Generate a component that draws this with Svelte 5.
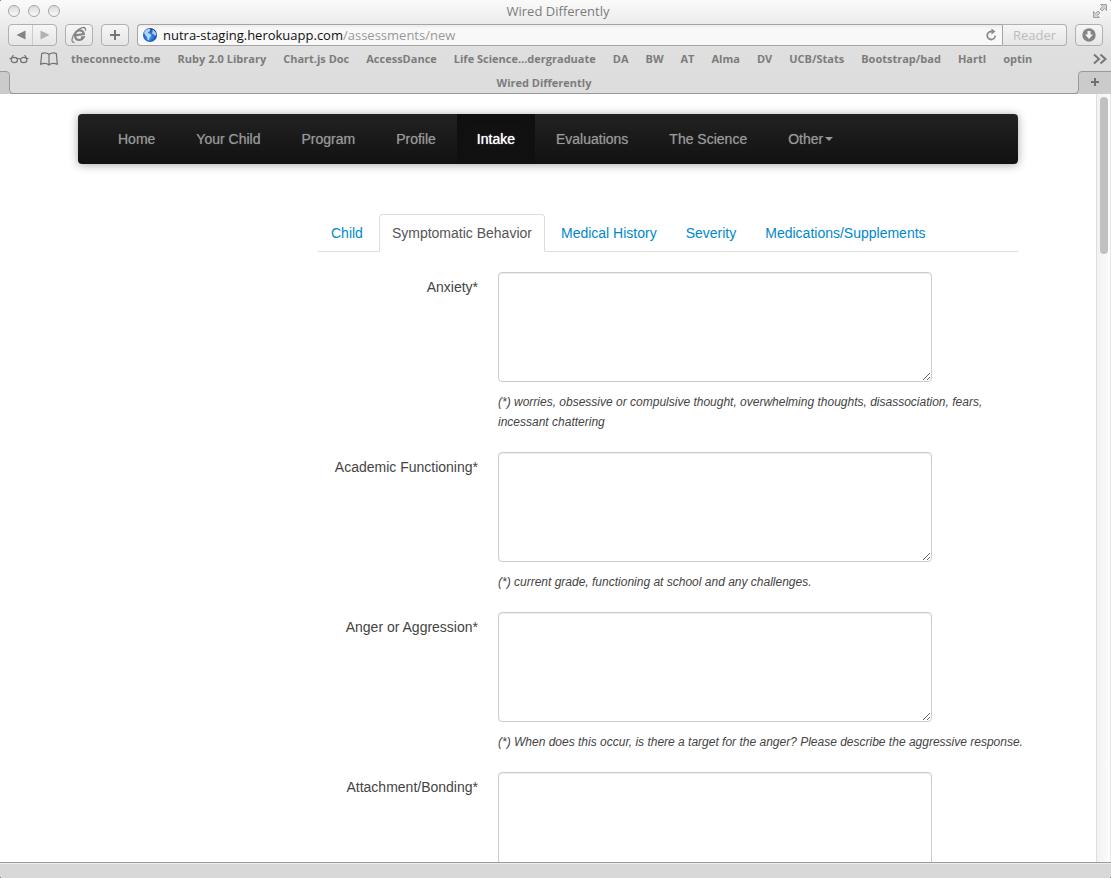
<script>
  const bookmarks = [
    'theconnecto.me',
    'Ruby 2.0 Library',
    'Chart.js Doc',
    'AccessDance',
    'Life Science…dergraduate',
    'DA',
    'BW',
    'AT',
    'Alma',
    'DV',
    'UCB/Stats',
    'Bootstrap/bad',
    'Hartl',
    'optin'
  ];
  const sections = [
    'Home',
    'Your Child',
    'Program',
    'Profile',
    'Intake',
    'Evaluations',
    'The Science',
    'Other'
  ];
  const tabs = [
    'Child',
    'Symptomatic Behavior',
    'Medical History',
    'Severity',
    'Medications/Supplements'
  ];
  const fields = [
    {
      id: 'anxiety',
      label: 'Anxiety*',
      help: '(*) worries, obsessive or compulsive thought, overwhelming thoughts, disassociation, fears, incessant chattering'
    },
    {
      id: 'academic',
      label: 'Academic Functioning*',
      help: '(*) current grade, functioning at school and any challenges.'
    },
    {
      id: 'anger',
      label: 'Anger or Aggression*',
      help: '(*) When does this occur, is there a target for the anger? Please describe the aggressive response.'
    },
    { id: 'attachment', label: 'Attachment/Bonding*', help: '' }
  ];
</script>

<div class="window">
  <header class="chrome">
    <div class="titlebar">
      <div class="lights">
        <button aria-label="Close"></button>
        <button aria-label="Minimize"></button>
        <button aria-label="Zoom"></button>
      </div>
      <span class="title">Wired Differently</span>
      <button class="plain full" aria-label="Full screen">
        <svg width="16" height="16" viewBox="0 0 16 16">
          <path d="M8.500 1.500h6v6l-2-2-2.500 2.500-2-2 2.500-2.500zM7.500 14.500h-6v-6l2 2 2.500-2.500 2 2-2.500 2.500z" fill="#cfcfcf" stroke="#a2a2a2" stroke-width="1" />
        </svg>
      </button>
    </div>

    <div class="toolbar">
      <div class="pair">
        <button aria-label="Back">
          <svg width="10" height="10" viewBox="0 0 10 10"><path d="M9.500 .5v9L.5 5z" fill="#838383" /></svg>
        </button>
        <button aria-label="Forward">
          <svg width="10" height="10" viewBox="0 0 10 10"><path d="M.5 .5v9L9.500 5z" fill="#b2b2b2" /></svg>
        </button>
      </div>
      <button class="tool" aria-label="Internet Explorer">
        <svg width="18" height="18" viewBox="0 0 18 18" fill="none">
          <path d="M5 9.300 13.800 8C13.500 5.500 11.500 4 9 4.500S4.500 7.200 5 10s2.500 4.300 5 3.900c1.800-.3 3-1.300 3.600-2.600l-2.600.3" stroke="#868686" stroke-width="2.200" />
          <path d="M4.500 16.300C.5 17 1.500 10.500 6 5.800 9.500 2 14 .5 15.300 2.300c.4.600.4 1.500 0 2.500" stroke="#868686" stroke-width="1.300" />
        </svg>
      </button>
      <button class="tool" aria-label="Add bookmark">
        <svg width="12" height="12" viewBox="0 0 12 12"><path d="M6 1v10M1 6h10" stroke="#777" stroke-width="2" /></svg>
      </button>
      <div class="address">
        <svg width="16" height="16" viewBox="0 0 16 16" aria-hidden="true">
          <defs>
            <radialGradient id="globe" cx=".45" cy=".6" r=".6">
              <stop offset="0" stop-color="#58a6ee" />
              <stop offset=".65" stop-color="#1e62c4" />
              <stop offset="1" stop-color="#123a8e" />
            </radialGradient>
          </defs>
          <circle cx="8" cy="8" r="7" fill="url(#globe)" />
          <path d="M2 5.500C3 3 5 1.800 7.500 1.500l1 1.500-1 1.500L6 5l.5 1.500L8.500 7l.5 2-1.500 1.500-.5 3-1.500-.7-.5-3L3 8zM10.500 2.300l3 2.700.8 3-1.300 1-1.500-2-1.500-.5.500-2z" fill="#c5e6fb" opacity=".85" />
        </svg>
        <a class="url" href="#address">nutra-staging.herokuapp.com<span>/assessments/new</span></a>
        <button class="plain" aria-label="Reload">
          <svg width="14" height="14" viewBox="0 0 14 14">
            <path d="M8 3.500H7a4 4 0 1 0 4.200 4.200" fill="none" stroke="#8a8a8a" stroke-width="1.800" />
            <path d="M7.500 .5v6L11.500 3.500z" fill="#8a8a8a" />
          </svg>
        </button>
      </div>
      <button class="reader">Reader</button>
      <button class="tool" aria-label="Downloads">
        <svg width="14" height="14" viewBox="0 0 14 14">
          <circle cx="7" cy="7" r="6.700" fill="#858585" />
          <path d="M5.500 3h3v3.500h2.500L7 11 3 6.500h2.500z" fill="#f2f2f2" />
        </svg>
      </button>
    </div>

    <nav class="bookmarks" aria-label="Bookmarks">
      <button class="plain" aria-label="Reading list">
        <svg width="20" height="12" viewBox="0 0 20 12" fill="none" stroke="#717171" stroke-width="1.200">
          <path d="M.5 5.500h2M17.500 5.500h2M8.500 6q1.500-1 3 0M2 5.500 4.500 2M18 5.500 15.500 2" />
          <ellipse cx="5.300" cy="7" rx="3.200" ry="2.600" /><ellipse cx="14.700" cy="7" rx="3.200" ry="2.600" />
        </svg>
      </button>
      <button class="plain book" aria-label="Bookmarks">
        <svg width="18" height="14" viewBox="0 0 18 14" fill="none" stroke="#717171" stroke-width="1.200">
          <path d="M9 2.500C7.500.8 4 .5 1.700 1.500L.7 12.300C3.500 11.200 7 11.300 9 13c2-1.700 5.500-1.800 8.300-.7L16.300 1.500C14 .5 10.500.8 9 2.500zV13" />
        </svg>
      </button>
      {#each bookmarks as name}
        <a href="#bookmark">{name}</a>
      {/each}
      <button class="plain more" aria-label="More bookmarks">
        <svg width="14" height="12" viewBox="0 0 14 12"><path d="M1 1.500 6 6 1 10.500M7.500 1.500l5 4.500-5 4.500" fill="none" stroke="#777" stroke-width="2" /></svg>
      </button>
    </nav>

    <div class="tabbar">
      <svg width="14" height="23" viewBox="0 0 14 23" aria-hidden="true">
        <path d="M0 .5h6q3 0 3 3v15.500q0 4 4.500 4H0z" fill="#cbcbcb" />
        <path d="M0 .5h6q3.500 0 3.500 3v15.500q0 3.500 4 3.500" fill="none" stroke="#9a9a9a" />
      </svg>
      <span>Wired Differently</span>
      <button class="plain" aria-label="New tab">
        <svg width="37" height="23" viewBox="0 0 37 23">
          <path d="M37 .5H8q-3 0-3 3v15.500q0 4-4.500 4H37z" fill="#cbcbcb" />
          <path d="M37 .5H8q-3.500 0-3.500 3v15.500q0 3.500-4 3.500" fill="none" stroke="#9a9a9a" />
          <path d="M21 7v8M17 11h8" stroke="#707070" stroke-width="2" />
        </svg>
      </button>
    </div>
  </header>

  <div class="viewport">
    <main>
      <div class="container">
        <nav class="navbar" aria-label="Main">
          {#each sections as name}
            <a href="#section" class:active={name === 'Intake'}>{name}{#if name === 'Other'}<i class="caret"></i>{/if}</a>
          {/each}
        </nav>
        <div class="content">
          <nav class="tabs" aria-label="Assessment">
            {#each tabs as name}
              <a href="#tab" class:active={name === 'Symptomatic Behavior'}>{name}</a>
            {/each}
          </nav>
          <form>
            {#each fields as field}
              <div class="group">
                <label for={field.id}>{field.label}</label>
                <div class="controls">
                  <textarea id={field.id}></textarea>
                  {#if field.help}<p>{field.help}</p>{/if}
                </div>
              </div>
            {/each}
          </form>
        </div>
      </div>
    </main>
    <div class="scrollbar"><div class="thumb"></div></div>
  </div>
  <footer></footer>
</div>

<style>
  :global(body) {
    margin: 0;
    background: #000;
  }
  * {
    box-sizing: border-box;
  }
  .window {
    display: flex;
    flex-direction: column;
    height: 100vh;
    overflow: hidden;
    border-radius: 2px;
    background: #fff;
    font-family: 'Liberation Sans', Arial, sans-serif;
  }
  a {
    text-decoration: none;
  }
  svg {
    display: block;
  }
  button {
    display: flex;
    align-items: center;
    justify-content: center;
    margin: 0;
    padding: 0;
    font: inherit;
  }
  .plain {
    border: 0;
    background: none;
  }

  .chrome {
    flex: none;
    border-bottom: 1px solid #999;
    background: linear-gradient(#fafafa, #ececec 24px, #dfdfdf 50px, #dcdcdc);
    color: #7c7c7c;
    font-family: 'Open Sans', 'Noto Sans', sans-serif;
    font-size: 13px;
  }
  .titlebar {
    display: grid;
    grid-template-columns: 1fr auto 1fr;
    align-items: center;
    height: 24px;
    padding: 0 3px 2px 8px;
  }
  .lights {
    display: flex;
    gap: 8px;
  }
  .lights button {
    width: 12px;
    height: 12px;
    border: 1px solid #a6a6a6;
    border-radius: 50%;
    background: linear-gradient(#dcdcdc, #f8f8f8);
  }
  .full {
    justify-self: end;
  }
  .toolbar {
    display: flex;
    gap: 8px;
    height: 22px;
    padding: 0 8px;
  }
  .pair,
  .tool,
  .reader {
    flex: none;
    border: 1px solid #b0b0b0;
    border-radius: 4px;
    background: linear-gradient(#f6f6f6, #e6e6e6);
  }
  .pair {
    display: flex;
    width: 49px;
  }
  .pair button {
    flex: 1;
    border: 0;
    background: none;
  }
  .pair button + button {
    border-left: 1px solid #cbcbcb;
  }
  .tool {
    width: 28px;
  }
  .address {
    display: flex;
    flex: 1;
    align-items: center;
    min-width: 0;
    margin-right: -8px;
    padding: 0 4px;
    border: 1px solid #a4a4a4;
    border-right: 0;
    border-radius: 4px 0 0 4px;
    background: linear-gradient(#ececec, #f8f8f8 4px);
  }
  .url {
    flex: 1;
    min-width: 0;
    margin-left: 5px;
    overflow: hidden;
    color: #111;
    line-height: 20px;
    white-space: nowrap;
  }
  .url span {
    color: #999;
  }
  .reader {
    width: 65px;
    border-left-color: #a4a4a4;
    border-radius: 0 4px 4px 0;
    color: #bcbcbc;
  }
  .bookmarks {
    display: flex;
    align-items: center;
    gap: 17px;
    height: 25px;
    padding: 0 4px 0 9px;
    overflow: hidden;
    font-size: 11px;
    font-weight: 700;
    white-space: nowrap;
  }
  .bookmarks a {
    color: #7c7c7c;
  }
  .bookmarks .book {
    margin: 0 -4px 0 -6px;
  }
  .bookmarks .more {
    margin-left: auto;
  }
  .tabbar {
    display: flex;
    align-items: center;
    height: 22px;
    font-size: 11px;
    font-weight: 700;
  }
  .tabbar span {
    flex: 1;
    text-align: center;
  }

  .viewport {
    display: flex;
    flex: 1;
    min-height: 0;
  }
  main {
    flex: 1;
    min-width: 0;
    overflow: hidden;
    color: #444;
    font-size: 14px;
    line-height: 20px;
  }
  .container {
    max-width: 940px;
    margin: 0 auto;
    padding-top: 20px;
  }
  .navbar {
    display: flex;
    gap: 1px;
    min-height: 50px;
    padding-left: 20px;
    border-radius: 4px;
    background: linear-gradient(#222, #111);
    box-shadow: 0 1px 10px rgba(0, 0, 0, 0.35);
  }
  .navbar a {
    display: flex;
    align-items: center;
    padding: 0 20px;
    color: #999;
    text-shadow: 0 0 1px rgba(153, 153, 153, 0.6);
    white-space: nowrap;
  }
  .navbar .active {
    background: #111;
    box-shadow: inset 0 3px 8px rgba(0, 0, 0, 0.125);
    color: #fff;
    text-shadow: 0 0 1px #fff;
  }
  .caret {
    margin-left: 2px;
    border: 4px solid transparent;
    border-top-color: #999;
    border-bottom: 0;
  }
  .content {
    max-width: 700px;
    margin: 50px 0 0 auto;
  }
  .tabs {
    display: flex;
    gap: 3px;
    border-bottom: 1px solid #ddd;
  }
  .tabs a {
    margin-bottom: -1px;
    padding: 8px 12px;
    border: 1px solid transparent;
    border-radius: 4px 4px 0 0;
    color: #0088cc;
    white-space: nowrap;
  }
  .tabs .active {
    border-color: #ddd #ddd #fff;
    background: #fff;
    color: #555;
  }
  form {
    padding-top: 20px;
  }
  .group {
    display: grid;
    grid-template-columns: 160px 1fr;
    gap: 20px;
    margin-bottom: 20px;
  }
  label {
    padding-top: 5px;
    text-align: right;
  }
  textarea {
    display: block;
    width: 100%;
    max-width: 434px;
    height: 110px;
    border: 1px solid #ccc;
    border-radius: 4px;
    background: #fff;
    box-shadow: inset 0 1px 1px rgba(0, 0, 0, 0.075);
  }
  p {
    margin: 10px -8px 0 0;
    font-size: 12px;
    font-style: italic;
  }
  .scrollbar {
    flex: none;
    width: 15px;
    padding: 3px;
    border-right: 1px solid #e8e8e8;
    border-left: 1px solid #dedede;
    background: linear-gradient(90deg, #f2f2f2, #fcfcfc);
  }
  .thumb {
    width: 8px;
    height: 157px;
    border-radius: 4px;
    background: #c1c1c1;
  }
  footer {
    flex: none;
    height: 16px;
    border-top: 1px solid #999;
    background: #d8d8d8;
    box-shadow: inset 0 1px #eee;
  }
</style>
